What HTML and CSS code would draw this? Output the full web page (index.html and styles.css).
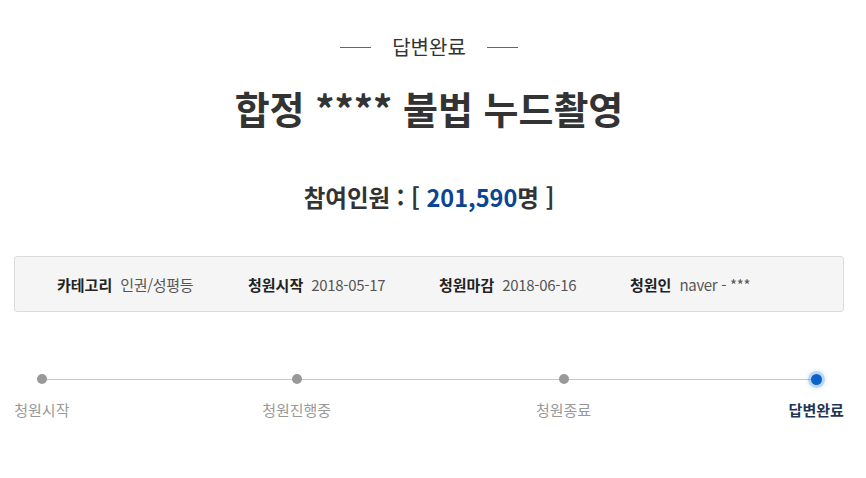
FILE: index.html
```html
<!DOCTYPE html>
<html lang="ko">
<head>
<meta charset="utf-8">
<link rel="stylesheet" href="styles.css">
</head>
<body>
<div class="page">
  <div class="status"><span class="line"></span><span class="status-text">답변완료</span><span class="line"></span></div>
  <h1 class="title">합정 **** 불법 누드촬영</h1>
  <div class="count">참여인원 : [ <span class="num">201,590</span>명 ]</div>
  <div class="info">
    <div class="item"><b>카테고리</b><span>인권/성평등</span></div>
    <div class="item"><b>청원시작</b><span>2018-05-17</span></div>
    <div class="item"><b>청원마감</b><span>2018-06-16</span></div>
    <div class="item"><b>청원인</b><span>naver - ***</span></div>
  </div>
  <div class="steps">
    <div class="step s1"><span class="dot"></span><span class="label">청원시작</span></div>
    <div class="step s2"><span class="dot"></span><span class="label">청원진행중</span></div>
    <div class="step s3"><span class="dot"></span><span class="label">청원종료</span></div>
    <div class="step s4 active"><span class="dot"></span><span class="label">답변완료</span></div>
  </div>
</div>
</body>
</html>
```
FILE: styles.css
```css
* { box-sizing: border-box; }
html, body { margin: 0; padding: 0; background: #fff; }
body {
  font-family: "Noto Sans CJK KR", "Noto Sans", sans-serif;
  color: #333;
}
.page { padding: 0 22px 0 14px; width: 866px; }
.status {
  display: flex;
  justify-content: center;
  align-items: center;
  gap: 21px;
  margin-top: 33px;
  line-height: 28px;
  height: 28px;
}
.line { width: 31px; height: 1px; background: #666; }
.status-text { font-size: 20px; color: #333; }
.title {
  margin: 21px 0 0;
  text-align: center;
  font-size: 38px;
  font-weight: 700;
  line-height: 52px;
  color: #333;
}
.count {
  margin-top: 46px;
  text-align: center;
  font-size: 23.5px;
  font-weight: 700;
  line-height: 34px;
  color: #333;
}
.count .num { color: #0b4591; }
.info {
  margin-top: 42px;
  height: 56px;
  background: #f5f5f5;
  border: 1px solid #dcdcdc;
  border-radius: 3px;
  display: flex;
  align-items: center;
  padding-left: 42px;
  font-size: 15px;
  color: #444;
}
.item { width: 191px; display: flex; gap: 8px; align-items: center; }
.item b { font-weight: 700; color: #222; }
.item span { color: #555; letter-spacing: -0.3px; }
.steps {
  margin-top: 62px;
  display: flex;
  position: relative;
}
.steps::before {
  content: "";
  position: absolute;
  left: 26px;
  right: 28px;
  top: 5px;
  height: 1px;
  background: #c8c8c8;
}
.step { width: 56px; display: flex; flex-direction: column; align-items: center; position: relative; }
.s2 { margin-left: 199px; }
.s3 { margin-left: 211px; }
.s4 { margin-left: 197px; }
.dot {
  width: 10px; height: 10px; border-radius: 50%;
  background: #999;
}
.active .dot {
  width: 11px; height: 11px;
  margin-top: -0.5px;
  background: #0a63c9;
  box-shadow: 0 0 0 3px rgba(10, 99, 201, 0.2), 0 0 3px 5px rgba(10, 99, 201, 0.08);
}
.label { margin-top: 16px; font-size: 15px; color: #999; line-height: 20px; white-space: nowrap; }
.active .label { margin-top: 15.5px; color: #1d3557; font-weight: 700; }
```
